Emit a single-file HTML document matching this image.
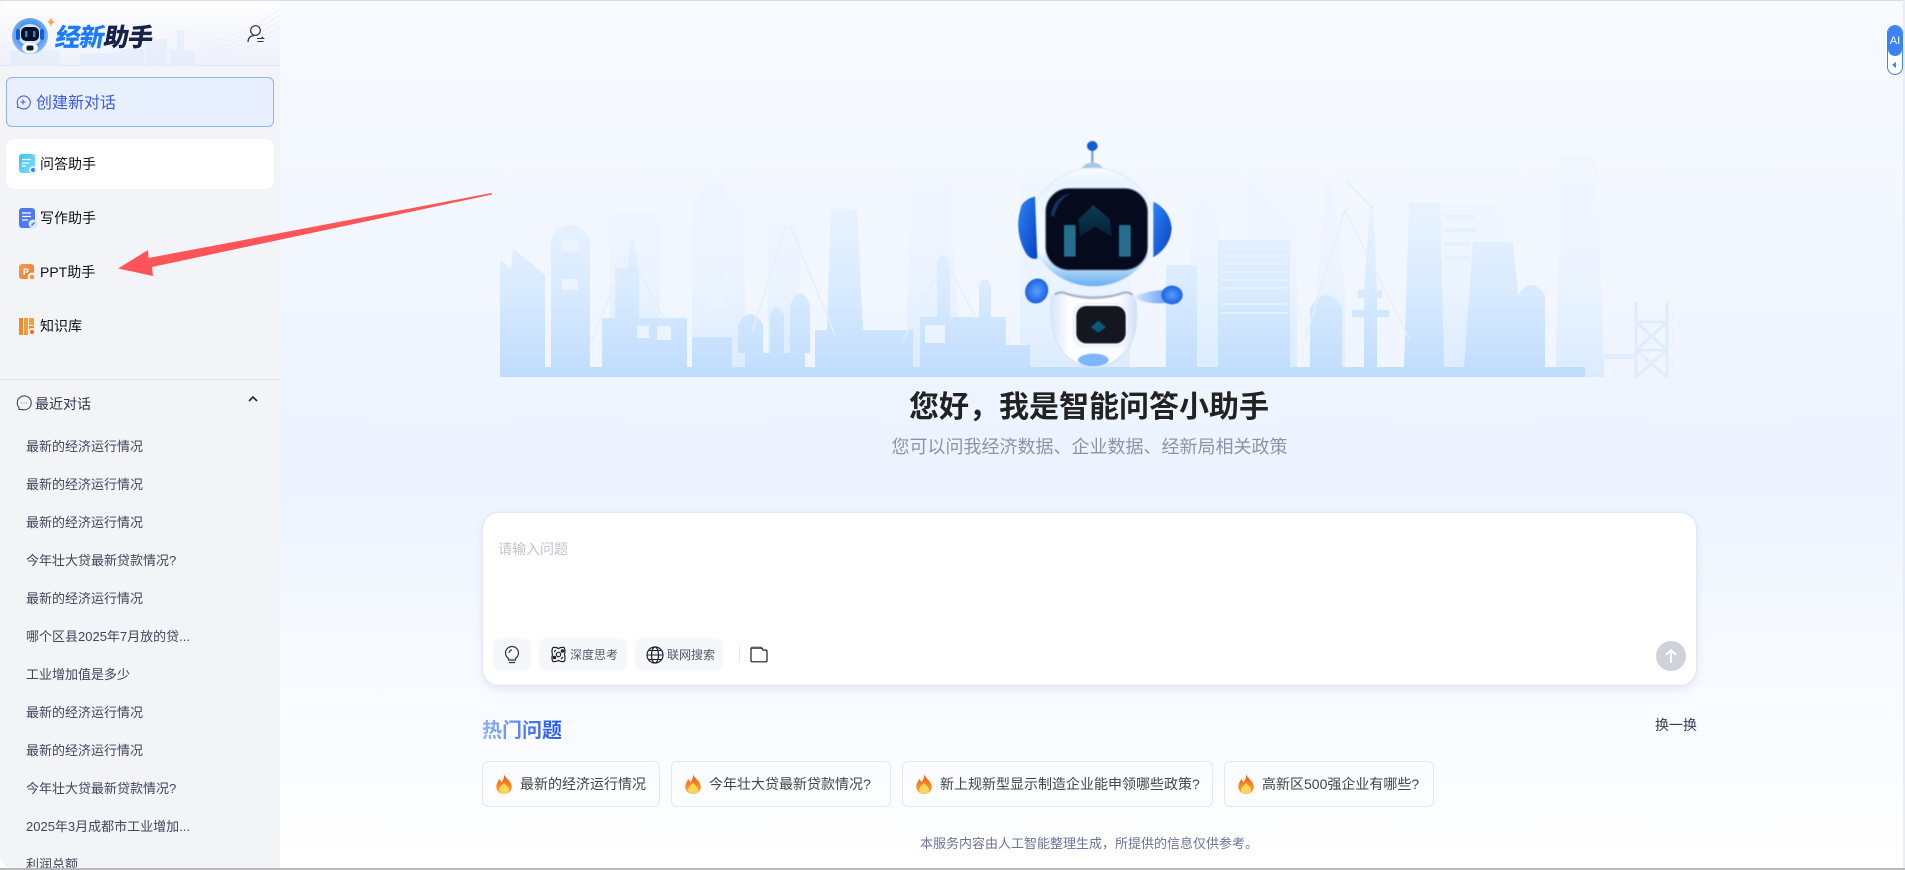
<!DOCTYPE html>
<html lang="zh-CN"><head><meta charset="utf-8"><title>经新助手</title>
<style>
html,body{margin:0;padding:0;width:1905px;height:870px;overflow:hidden;background:#fff}
body{position:relative;font-family:"Liberation Sans","Noto Sans CJK SC",sans-serif;color:#333}
.a,.t{position:absolute}
.t{white-space:nowrap;line-height:20px}
svg{position:absolute;overflow:visible}
#main{left:0;top:0;width:1905px;height:870px;background:linear-gradient(180deg,#f7faff 0,#f3f7ff 200px,#edf4ff 480px,#f5f9ff 620px,#fafcff 760px,#fff 860px)}
#side{left:0;top:1px;width:280px;height:867px;background:#f3f4f7;border-radius:12px 0 0 12px;overflow:hidden}
#hd{left:0;top:0;width:280px;height:64px;background:linear-gradient(180deg,#fefeff 0,#f6f7fe 50%,#eff2fb 100%);border-bottom:1px solid #e3e9f6}
.nav{font-size:14px;color:#111;left:40px}
.li{font-size:13px;color:#3f4659;left:26px}
.btn{background:#f6f7fb;border-radius:8px;height:33px;top:638px}
.chip{top:761px;height:44px;border:1px solid #e2e7f1;border-radius:6px;box-sizing:content-box}
.cht{font-size:14px;color:#444;top:774px}
</style></head><body>
<div class="a" id="main"></div>
<div class="a" style="left:0;top:0;width:1905px;height:1px;background:#dcdcdc"></div>
<div class="a" style="left:1903px;top:0;width:2px;height:870px;background:#e8edf5"></div>

<!-- City skyline -->
<svg style="left:0;top:0" width="1905" height="870" viewBox="0 0 1905 870">
<defs>
<linearGradient id="c1" gradientUnits="userSpaceOnUse" x1="0" y1="200" x2="0" y2="377"><stop offset="0" stop-color="#e9f3ff"/><stop offset=".5" stop-color="#d9ebff"/><stop offset="1" stop-color="#bfdcfe"/></linearGradient>
<linearGradient id="c2" gradientUnits="userSpaceOnUse" x1="0" y1="155" x2="0" y2="377"><stop offset="0" stop-color="#f2f7ff"/><stop offset=".55" stop-color="#ecf4ff"/><stop offset="1" stop-color="#dbebff"/></linearGradient>
<linearGradient id="fl" x1="0" y1="0" x2="0" y2="1"><stop offset="0" stop-color="#f2541b"/><stop offset=".6" stop-color="#fb8a22"/><stop offset="1" stop-color="#ffb13d"/></linearGradient>
</defs>
<!-- faint back layer -->
<g fill="url(#c2)">
<rect x="610" y="212" width="50" height="155"/>
<polygon points="692,203 716,172 732,197 745,203 745,367 692,367"/>
<rect x="768" y="223" width="30" height="130"/>
<polygon points="911,185 951,185 960,367 905,367"/>
<path d="M1190 367V213q14-30 29 0V367z"/>
<polygon points="1246,173 1297,225 1297,367 1246,367"/>
<polygon points="1328,155 1345,290 1345,367 1310,367"/>
<rect x="1440" y="205" width="60" height="162"/>
<polygon points="1500,205 1527,367 1440,367"/>
<polygon points="1560,155 1596,155 1604,367 1556,367"/>
<rect x="1020" y="170" width="110" height="197"/>
<rect x="1585" y="367" width="19" height="10"/>
<rect x="1604" y="354" width="30" height="5"/>
<rect x="772" y="235" width="28" height="50"/>
</g>
<g fill="url(#c1)">
<polygon points="500,260 511,268 513,248 545,275 545,367 500,367"/>
<path d="M551 367V238q19-26 39 0V367z"/>
<polygon points="627,268 632,238 636,252 639,268 639,318 615,318 615,268"/>
<rect x="602" y="318" width="85" height="49"/>
<rect x="692" y="337" width="40" height="30"/>
<path d="M738 353V325q12-22 25 0V353zM770 353V315q7-15 14 0V353zM790 353V305q10-24 20 0V353zM745 353h60v14h-60z"/>
<polygon points="831,209 857,209 863,330 913,330 913,367 815,367 815,330 827,330"/>
<path d="M937 317V262q6-14 13 0V317zM979 317V286q6-14 12 0V317z"/>
<rect x="920" y="317" width="86" height="50"/>
<rect x="1006" y="345" width="24" height="22"/>
<rect x="1166" y="265" width="31" height="102"/>
<rect x="1218" y="240" width="72" height="127"/>
<path d="M1310 367V308q16-26 32 0V367z"/>
<polygon points="1370,205 1373,205 1377,290 1382,290 1382,298 1377,298 1377,310 1389,310 1389,317 1377,317 1377,367 1364,367 1364,317 1352,317 1352,310 1364,310 1364,298 1358,298 1358,290 1364,290"/>
<polygon points="1409,203 1440,203 1444,367 1404,367"/>
<polygon points="1473,242 1513,242 1525,367 1464,367"/>
<path d="M1518 367V295q13-20 27 0V367z"/>
<rect x="500" y="367" width="1085" height="10"/>
</g>
<!-- lattice -->
<g fill="none" stroke="#e0ecfd" stroke-width="3"><path d="M1636 302V377M1667 302V377M1636 322H1667M1636 350H1667M1636 322L1667 350M1667 322L1636 350M1636 350L1667 377M1667 350L1636 377"/></g>
<!-- cables -->
<g fill="none" stroke="#e4effe" stroke-width="1.5"><path d="M592 340L625 258M665 320L632 258M752 332L786 225M835 335L790 225M903 340L944 262M976 318L946 262M1305 340L1345 210L1410 340M1345 180L1372 208M1232 250H1270"/></g>
<!-- windows and stripes -->
<g fill="#eaf3ff">
<rect x="562" y="240" width="16" height="11"/><rect x="562" y="279" width="16" height="11"/>
<rect x="637" y="326" width="12" height="12"/><rect x="657" y="326" width="14" height="14"/>
<rect x="711" y="270" width="14" height="36"/>
<rect x="925" y="325" width="20" height="18"/>
</g>
<g fill="#e6f1ff">
<rect x="1221" y="247" width="66" height="2"/><rect x="1221" y="255" width="66" height="2"/><rect x="1221" y="263" width="66" height="2"/><rect x="1221" y="271" width="66" height="2"/><rect x="1221" y="279" width="66" height="2"/><rect x="1221" y="287" width="66" height="2"/><rect x="1221" y="303" width="66" height="2"/><rect x="1221" y="312" width="66" height="2"/>
<rect x="1445" y="215" width="30" height="4"/><rect x="1445" y="228" width="30" height="4"/><rect x="1445" y="242" width="25" height="4"/><rect x="1445" y="256" width="25" height="4"/>
</g>
</svg>

<!-- Robot -->
<svg style="left:980px;top:130px;filter:blur(.4px)" width="220" height="250" viewBox="0 0 660 750">
<defs>
<linearGradient id="hd1" x1="0" y1="0" x2="0" y2="1"><stop offset="0" stop-color="#fbfdff"/><stop offset=".1" stop-color="#eaf4fe"/><stop offset=".7" stop-color="#f6faff"/><stop offset=".84" stop-color="#b6dafa"/><stop offset="1" stop-color="#62aef1"/></linearGradient>
<linearGradient id="ear" x1="0" y1="0" x2="1" y2="1"><stop offset="0" stop-color="#2d83f5"/><stop offset="1" stop-color="#0641c4"/></linearGradient>
<linearGradient id="bdy" x1="0" y1="0" x2="1" y2="0"><stop offset="0" stop-color="#d7e6fa"/><stop offset=".2" stop-color="#fbfdff"/><stop offset=".8" stop-color="#fbfdff"/><stop offset="1" stop-color="#cfe0f7"/></linearGradient>
<radialGradient id="hnd"><stop offset="0" stop-color="#5a9ff8"/><stop offset="1" stop-color="#1a62e4"/></radialGradient>
<linearGradient id="arm" x1="0" y1="0" x2="1" y2="0"><stop offset="0" stop-color="#cfe2fc"/><stop offset="1" stop-color="#5f9df6"/></linearGradient>
<linearGradient id="dia" x1="0" y1="0" x2="0" y2="1"><stop offset="0" stop-color="#0b3d58"/><stop offset="1" stop-color="#071f36"/></linearGradient>
</defs>
<path d="M337 50V102" stroke="#6d9bc6" stroke-width="6"/>
<ellipse cx="337" cy="48" rx="16" ry="15" fill="#0e5fd0"/>
<path d="M306 114Q316 98 337 98T368 114Z" fill="#a9c6e2"/>
<path d="M213 520Q210 490 240 488Q340 510 440 488Q470 490 470 540Q475 640 420 680Q385 712 340 712Q290 712 255 672Q210 630 213 520Z" fill="url(#bdy)" stroke="#d2e0f3" stroke-width="3"/>
<path d="M225 494Q240 482 262 492Q340 515 420 492Q440 482 458 494" fill="none" stroke="#aab6ca" stroke-width="7"/>
<ellipse cx="340" cy="690" rx="46" ry="19" fill="#7db6f8"/>
<rect x="280" y="520" width="165" height="130" rx="38" fill="#f4f8fe" stroke="#dbe6f4" stroke-width="2"/>
<rect x="289" y="528" width="148" height="112" rx="30" fill="#14171f"/>
<path d="M355 572L378 592L355 608L332 592Z" fill="#0b5a7c"/>
<path d="M470 497Q510 480 560 480L565 518Q510 525 470 507Z" fill="url(#arm)"/>
<ellipse cx="576" cy="495" rx="32" ry="28" fill="url(#hnd)"/>
<ellipse cx="170" cy="483" rx="34" ry="38" fill="url(#hnd)" transform="rotate(25 170 483)"/>
<ellipse cx="340" cy="292" rx="188" ry="178" fill="url(#hd1)" stroke="#dbe9fb" stroke-width="3"/>
<path d="M125 225Q140 205 165 200L172 385Q150 392 135 365Q100 300 125 225Z" fill="url(#ear)"/>
<path d="M520 215Q570 240 575 295Q572 350 520 382Z" fill="url(#ear)"/>
<rect x="197" y="175" width="306" height="245" rx="70" fill="#050a1d" stroke="#6c7f98" stroke-width="3"/>
<path d="M212 255Q225 195 275 190Q235 205 222 262Z" fill="#123260"/>
<path d="M340 225L390 268L395 320L345 290L300 320L295 268Z" fill="url(#dia)"/>
<rect x="252" y="285" width="35" height="95" rx="3" fill="#256f8d"/>
<rect x="417" y="285" width="35" height="95" rx="3" fill="#256f8d"/>
</svg>

<div class="t" style="left:0;width:2178px;text-align:center;top:390px;font-size:30px;line-height:36px;font-weight:700;color:#222">您好，我是智能问答小助手</div>
<div class="t" style="left:0;width:2179px;text-align:center;top:436px;font-size:18px;line-height:22px;color:#8a93ab">您可以问我经济数据、企业数据、经新局相关政策</div>

<!-- Input -->
<div class="a" style="left:482px;top:512px;width:1213px;height:172px;background:#fff;border:1px solid #e1e6f1;border-radius:17px;box-shadow:0 3px 8px rgba(150,165,200,.22)"></div>
<div class="t" style="left:498px;top:539px;font-size:14px;color:#c0c4cc">请输入问题</div>
<div class="a btn" style="left:493px;width:38px"></div>
<div class="a btn" style="left:539px;width:88px"></div>
<div class="a btn" style="left:635px;width:88px"></div>
<svg style="left:503px;top:645px" width="18" height="19" viewBox="0 0 18 19" fill="none" stroke="#2b3242" stroke-width="1.2"><path d="M5.5 13.5C3.5 12 2.5 10 2.5 8A6.5 6.5 0 0 1 15.5 8C15.500 10 14.500 12 12.500 13.500V15H5.500Z"/><path d="M6 17.500H12M6 8A3 3 0 0 1 9 5"/></svg>
<svg style="left:550px;top:646px" width="17" height="17" viewBox="0 0 17 17" fill="none" stroke="#1c2130" stroke-width="1.2"><path d="M3 1.500Q6 1 8.500 2.500Q11 1 14 1.500Q15.800 4 14.500 8.500Q15.800 13 14 15.500Q11 16 8.500 14.500Q6 16 3 15.500Q1.200 13 2.500 8.500Q1.200 4 3 1.500Z"/><circle cx="8.500" cy="8.500" r="2.200"/><path d="M4 6L6 4M11 13L13 11"/><circle cx="4.500" cy="11.500" r="1.200" fill="#1c2130"/><circle cx="12.500" cy="5" r="1.200" fill="#1c2130"/></svg>
<div class="t" style="left:570px;top:645px;font-size:12px;color:#50586c">深度思考</div>
<svg style="left:646px;top:646px" width="18" height="18" viewBox="0 0 18 18" fill="none" stroke="#1c2130" stroke-width="1.2"><circle cx="9" cy="9" r="8"/><ellipse cx="9" cy="9" rx="3.500" ry="8"/><path d="M1 9H17M3 4.500H15M3 13.500H15" stroke-width="1"/></svg>
<div class="t" style="left:667px;top:645px;font-size:12px;color:#50586c">联网搜索</div>
<div class="a" style="left:739px;top:646px;width:1px;height:16px;background:#e5e7ee"></div>
<svg style="left:750px;top:645px" width="18" height="18" viewBox="0 0 18 18" fill="none"><path d="M1 3V2.500Q1 1 2.500 1H12L14 4H2Z" fill="#c9ccd3"/><path d="M1 5.500V3.500Q1 2.500 2 3H11.500L13 5H15.500Q17 5 17 6.500V15.500Q17 16.800 15.500 16.800H2.500Q1 16.800 1 15.500Z" stroke="#181c2a" stroke-width="1.200"/></svg>
<div class="a" style="left:1656px;top:641px;width:30px;height:30px;border-radius:50%;background:#cfd2db"></div>
<svg style="left:1664px;top:648px" width="14" height="16" viewBox="0 0 14 16" fill="none" stroke="#fff" stroke-width="2"><path d="M7 15V2M2 7L7 2L12 7"/></svg>

<!-- Hot -->
<div class="t" style="left:482px;top:719px;font-size:20px;line-height:24px;font-weight:700;background:linear-gradient(90deg,#8fb6fa,#1f52e6);-webkit-background-clip:text;background-clip:text;color:transparent">热门问题</div>
<div class="t" style="left:1655px;top:715px;font-size:14px;color:#363d52">换一换</div>

<div class="a chip" style="left:482px;width:176px"></div>
<div class="a chip" style="left:671px;width:218px"></div>
<div class="a chip" style="left:902px;width:309px"></div>
<div class="a chip" style="left:1224px;width:208px"></div>

<svg width="0" height="0"><defs>
<symbol id="flame" viewBox="0 0 18 20"><path d="M9 0C10 4 15 6 16.500 11C17.800 16 14 20 9 20C4 20 .5 16 1.500 11C2 8.500 3.500 7 4 5C5.500 6 6 7.500 6.200 8.500C8 6.500 9.500 3.500 9 0Z" fill="url(#fl)"/><path d="M9 8.500C10 11 14 12.500 14 15.800C14 18.200 11.700 19.800 9 19.800C6.300 19.800 4 18 4 15.800C4 13 8 11 9 8.500Z" fill="#ffd75e"/></symbol>
</defs></svg>
<svg style="left:495px;top:774px" width="18" height="20"><use href="#flame"/></svg>
<svg style="left:684px;top:774px" width="18" height="20"><use href="#flame"/></svg>
<svg style="left:915px;top:774px" width="18" height="20"><use href="#flame"/></svg>
<svg style="left:1237px;top:774px" width="18" height="20"><use href="#flame"/></svg>
<div class="t cht" style="left:520px">最新的经济运行情况</div>
<div class="t cht" style="left:709px">今年壮大贷最新贷款情况?</div>
<div class="t cht" style="left:940px">新上规新型显示制造企业能申领哪些政策?</div>
<div class="t cht" style="left:1262px">高新区500强企业有哪些?</div>
<div class="t" style="left:920px;top:834px;font-size:13px;color:#6b7398">本服务内容由人工智能整理生成，所提供的信息仅供参考。</div>

<!-- AI tab -->
<div class="a" style="left:1887px;top:25px;width:16px;height:50px;box-sizing:border-box;background:#fff;border:1px solid #3b82f6;border-radius:8px;overflow:hidden">
<div style="height:30px;background:#3b82f6;border-radius:0 0 8px 8px;color:#fff;font-size:11px;line-height:30px;text-align:center">AI</div></div>
<div class="a" style="left:1892px;top:62px;border:3.500px solid transparent;border-right:4px solid #3b82f6;border-left:0"></div>

<!-- Sidebar -->
<div class="a" id="side">
<div class="a" id="hd">
<svg style="left:0;top:0" width="280" height="64" viewBox="0 0 280 64"><g fill="#dbe8fc" opacity=".45"><rect x="177" y="29" width="7" height="35"/><rect x="145" y="38" width="22" height="26"/><rect x="120" y="48" width="24" height="16"/><rect x="80" y="52" width="40" height="12"/><rect x="170" y="50" width="25" height="14"/><rect x="10" y="50" width="50" height="14"/></g><g fill="none" stroke="#e7eaf8" stroke-width=".6"><path d="M0 45Q30 35 60 50M0 49Q30 39 60 54M205 42Q245 34 280 8M205 46Q245 38 280 14M205 50Q245 42 280 20M205 54Q245 46 280 26M205 58Q245 50 280 32"/></g></svg>
</div>
<svg style="left:10px;top:15px" width="46" height="44" viewBox="0 0 46 44">
<defs><radialGradient id="lg" cx=".5" cy=".45" r=".55"><stop offset=".6" stop-color="#4f93ea"/><stop offset="1" stop-color="#8fbcf2"/></radialGradient></defs>
<circle cx="20" cy="20" r="18" fill="url(#lg)"/>
<ellipse cx="20" cy="19" rx="12" ry="11" fill="#cfe3fa"/>
<rect x="6" y="13" width="4" height="11" rx="2" fill="#0f5fdc"/><rect x="30" y="13" width="4" height="11" rx="2" fill="#0f5fdc"/>
<rect x="11" y="11" width="18" height="14" rx="5" fill="#06102a"/>
<rect x="15" y="15" width="2.500" height="6" fill="#2c86b8"/><rect x="23" y="15" width="2.500" height="6" fill="#2c86b8"/>
<ellipse cx="20" cy="32" rx="8" ry="5.500" fill="#eef5fe"/><rect x="16.500" y="29.500" width="7" height="5" rx="2" fill="#14161f"/>
<path d="M41 2Q41.500 6 45 7Q41.500 8 41 12Q40.500 8 37 7Q40.500 6 41 2Z" fill="#f8a93a" transform="translate(0,-1)"/>
</svg>
<div class="t" style="left:56px;top:19px;font-size:25px;line-height:32px;font-weight:900;font-family:'Noto Sans CJK SC',sans-serif;transform:skewX(-10deg);letter-spacing:-.8px;color:#1a7bff">经新<span style="color:#16224a">助手</span></div>
<svg style="left:247px;top:23px" width="18" height="20" viewBox="0 0 18 20" fill="none" stroke="#2f3444" stroke-width="1.200"><circle cx="8.500" cy="6.500" r="4.800"/><path d="M1 18C1 14 3.500 12 7 11.500"/><path d="M10 14.500H16.500L14.500 12.800M16.500 17.500H10.500" stroke-width="1.100"/></svg>

<div class="a" style="left:6px;top:76px;width:266px;height:48px;background:#e8effe;border:1px solid #8fb3f7;border-radius:6px"></div>
<svg style="left:15px;top:93px" width="16" height="16" viewBox="0 0 16 16" fill="none" stroke="#3a55e0" stroke-width="1"><path d="M2.500 13.500L3 11.500A6.500 6.500 0 1 1 5 13.800Z"/><path d="M8 5.500V10.500M5.500 8H10.500"/></svg>
<div class="t" style="left:36px;top:93px;font-size:16px;line-height:20px;color:#3d5be2">创建新对话</div>

<div class="a" style="left:6px;top:138px;width:268px;height:50px;background:#fff;border-radius:8px"></div>
<svg style="left:18px;top:152px" width="20" height="22" viewBox="0 0 20 22"><defs><linearGradient id="q" x1="0" y1="0" x2="1" y2="1"><stop offset="0" stop-color="#3cc0f6"/><stop offset="1" stop-color="#82def9"/></linearGradient></defs><rect x="1" y="1" width="16" height="19" rx="3" fill="url(#q)"/><path d="M13 1H17V5Z" fill="#8fe8b4"/><path d="M4 6.500H13M4 10H11M4 13H8" stroke="#fff" stroke-width="1.300"/><circle cx="15" cy="17" r="4" fill="#e3efff"/><circle cx="15" cy="17" r="2" fill="#2a8cf5"/></svg>
<div class="t nav" style="top:153px">问答助手</div>
<svg style="left:18px;top:206px" width="20" height="22" viewBox="0 0 20 22"><rect x="1" y="1" width="16" height="20" rx="3" fill="#4f79f0"/><path d="M4 6H13M4 9.500H13M4 13H10" stroke="#fff" stroke-width="1.300"/><circle cx="15" cy="17" r="4.500" fill="#dbe5fd"/><path d="M13.500 18.500L16.500 15.500" stroke="#4470e8" stroke-width="1.300"/></svg>
<div class="t nav" style="top:207px">写作助手</div>
<svg style="left:18px;top:262px" width="20" height="20" viewBox="0 0 20 20"><defs><linearGradient id="p" x1="0" y1="0" x2="1" y2="1"><stop offset="0" stop-color="#f59a52"/><stop offset="1" stop-color="#ec7c34"/></linearGradient></defs><rect x="1" y="1" width="15" height="15" rx="3" fill="url(#p)"/><text x="5" y="12" font-size="9" font-weight="700" fill="#fff" font-family="Liberation Sans">P</text><circle cx="14" cy="14" r="4.500" fill="#fff3e6"/><circle cx="14" cy="14" r="2.200" fill="#f78f3c"/></svg>
<div class="t nav" style="top:261px">PPT助手</div>
<svg style="left:18px;top:316px" width="20" height="20" viewBox="0 0 20 20"><rect x="1" y="1" width="4" height="17" fill="#ee8a32"/><rect x="6" y="1" width="4" height="17" fill="#f39a3c"/><path d="M11 1H16V9L13.500 7.500L11 9Z" fill="#f6a23c"/><rect x="11" y="9" width="5" height="9" fill="#ef8b34"/><circle cx="14" cy="15" r="4" fill="#fff1e2"/><circle cx="14" cy="15" r="2" fill="#ee6a2c"/></svg>
<div class="t nav" style="top:315px">知识库</div>

<div class="a" style="left:0;top:378px;width:280px;height:1px;background:#e2e7ef"></div>
<svg style="left:16px;top:394px" width="16" height="16" viewBox="0 0 16 16" fill="none" stroke="#333a4e" stroke-width="1"><path d="M3 14.500L3 12.500A7 7 0 1 1 6 14.500Z"/><path d="M5.500 8H6M7.800 8H8.300M10 8H10.500" stroke-width="1.200"/></svg>
<div class="t" style="left:35px;top:393px;font-size:14px;color:#2f3546">最近对话</div>
<svg style="left:248px;top:394px" width="10" height="7" viewBox="0 0 10 7" fill="none" stroke="#1f2433" stroke-width="1.600"><path d="M1 6L5 2L9 6"/></svg>

<div class="t li" style="top:436px">最新的经济运行情况</div>
<div class="t li" style="top:474px">最新的经济运行情况</div>
<div class="t li" style="top:512px">最新的经济运行情况</div>
<div class="t li" style="top:550px">今年壮大贷最新贷款情况?</div>
<div class="t li" style="top:588px">最新的经济运行情况</div>
<div class="t li" style="top:626px">哪个区县2025年7月放的贷...</div>
<div class="t li" style="top:664px">工业增加值是多少</div>
<div class="t li" style="top:702px">最新的经济运行情况</div>
<div class="t li" style="top:740px">最新的经济运行情况</div>
<div class="t li" style="top:778px">今年壮大贷最新贷款情况?</div>
<div class="t li" style="top:816px">2025年3月成都市工业增加...</div>
<div class="t li" style="top:854px">利润总额</div>
</div>

<!-- Arrow -->
<svg style="left:0;top:0" width="600" height="300" viewBox="0 0 600 300"><path d="M118 268.500L148 250L148.500 258L491.500 193L492 194.500L152 267L153 276Z" fill="#ff5558"/></svg>

<div class="a" style="left:0;top:868px;width:1905px;height:2px;background:#b9b9b9"></div>
</body></html>
